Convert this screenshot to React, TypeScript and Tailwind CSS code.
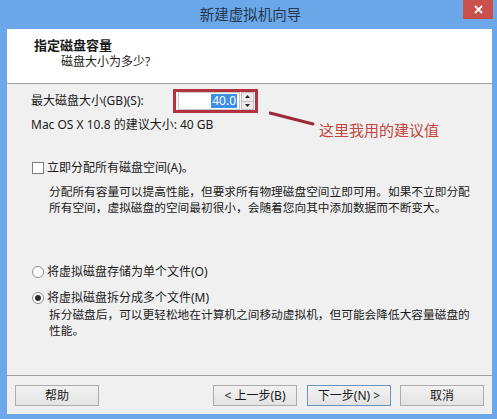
import { useState } from "react";

const WizardButton = ({
  label,
  primary = false,
  className = "",
}: {
  label: string;
  primary?: boolean;
  className?: string;
}) => (
  <button
    className={
      "h-[21px] w-[84px] text-[12px] leading-none text-[#1a1a1a] bg-gradient-to-b from-[#f2f2f2] to-[#e3e3e3] border " +
      (primary ? "border-[#6d93b8]" : "border-[#adadad]") +
      " " +
      className
    }
  >
    {label}
  </button>
);

const Radio = ({ checked }: { checked: boolean }) => (
  <span className="w-[12px] h-[12px] rounded-full border border-[#8c8c8c] bg-white flex items-center justify-center">
    {checked && <span className="w-[6px] h-[6px] rounded-full bg-[#2b2b2b]" />}
  </span>
);

const NewVmWizard = () => {
  const [size] = useState("40.0");
  const [split] = useState(true);

  return (
    <div className="w-[497px] h-[419px] bg-[#6ca7e9] flex flex-col font-['Noto_Sans','Noto_Sans_CJK_SC',sans-serif] text-[#1a1a1a] overflow-hidden">
      {/* title bar */}
      <div className="h-[29px] relative flex items-center justify-center">
        <span className="text-[14.5px] leading-none text-[#23384f] ml-[4px]">
          新建虚拟机向导
        </span>
        <div className="absolute right-[4px] top-0 w-[30px] h-[19px] bg-[#c9504b] flex items-center justify-center">
          <svg width="9" height="9" viewBox="0 0 9 9">
            <path d="M1 1L8 8M8 1L1 8" stroke="#fff" strokeWidth="1.8" />
          </svg>
        </div>
      </div>

      <div className="flex-1 ml-[7px] mr-[5px] mb-[5px] flex flex-col bg-[#f0f0f0]">
        {/* header */}
        <div className="h-[55px] bg-white border-b border-[#a0a0a0] pt-[8px]">
          <div className="pl-[27px] text-[13px] font-bold leading-[16px]">
            指定磁盘容量
          </div>
          <div className="pl-[54px] mt-[1px] text-[12px] leading-[16px]">
            磁盘大小为多少?
          </div>
        </div>

        {/* body */}
        <div className="flex-1 relative pl-[24px] text-[12px]">
          <div className="flex items-center mt-[5px] h-[24px]">
            <span className="w-[142px] leading-[16px]">最大磁盘大小(GB)(S):</span>
            <div className="w-[85px] h-[24px] border-[3px] border-[#b3323f] flex items-center pl-[2px] pr-[1px] bg-[#f7f7f7]">
              <div className="flex-1 h-[18px] bg-white border border-[#c9c9c9] flex items-center justify-end pr-[2px]">
                <span className="bg-[#3d8ee6] text-white leading-[14px] px-[1px]">{size}</span>
              </div>
              <div className="w-[13px] h-[18px] flex flex-col ml-[1px]">
                <span className="flex-1 border border-[#c2c2c2] bg-[#ececec] flex items-center justify-center">
                  <svg width="5" height="3" viewBox="0 0 5 3">
                    <path d="M0 3L2.5 0L5 3Z" fill="#222" />
                  </svg>
                </span>
                <span className="flex-1 border border-t-0 border-[#c2c2c2] bg-[#ececec] flex items-center justify-center">
                  <svg width="5" height="3" viewBox="0 0 5 3">
                    <path d="M0 0L2.5 3L5 0Z" fill="#222" />
                  </svg>
                </span>
              </div>
            </div>
          </div>
          <div className="mt-[4px] leading-[16px]">Mac OS X 10.8 的建议大小: 40 GB</div>

          {/* note pointing at the suggested value */}
          <svg
            className="absolute left-[262px] top-[27px]"
            width="46"
            height="15"
            viewBox="0 0 46 15"
          >
            <path d="M1 2L44 13" stroke="#9c2a3a" strokeWidth="3" strokeLinecap="round" />
          </svg>
          <span className="absolute left-[312px] top-[37px] text-[15px] leading-[18px] text-[#c4463f]">
            这里我用的建议值
          </span>

          <div className="flex items-center mt-[27px] h-[16px]">
            <span className="w-[12px] h-[12px] border border-[#7a7a7a] bg-white ml-[1px]" />
            <span className="ml-[3px] leading-[16px]">立即分配所有磁盘空间(A)。</span>
          </div>
          <p className="pl-[18px] mt-[7px] leading-[16px] text-[11.7px]">
            分配所有容量可以提高性能，但要求所有物理磁盘空间立即可用。如果不立即分配
            <br />
            所有空间，虚拟磁盘的空间最初很小，会随着您向其中添加数据而不断变大。
          </p>

          <div className="flex items-center mt-[49px] h-[16px]">
            <span className="ml-[1px]">
              <Radio checked={!split} />
            </span>
            <span className="ml-[3px] leading-[16px]">将虚拟磁盘存储为单个文件(O)</span>
          </div>
          <div className="flex items-center mt-[10px] h-[16px]">
            <span className="ml-[1px]">
              <Radio checked={split} />
            </span>
            <span className="ml-[3px] leading-[16px]">将虚拟磁盘拆分成多个文件(M)</span>
          </div>
          <p className="pl-[18px] mt-0 leading-[16px] text-[11.7px]">
            拆分磁盘后，可以更轻松地在计算机之间移动虚拟机，但可能会降低大容量磁盘的
            <br />
            性能。
          </p>
        </div>

        {/* footer */}
        <div className="h-[39px] border-t border-[#a0a0a0] flex items-start pt-[9px] px-[8px]">
          <WizardButton label="帮助" />
          <div className="flex-1" />
          <WizardButton label="< 上一步(B)" />
          <WizardButton label="下一步(N) >" primary className="ml-[10px]" />
          <WizardButton label="取消" className="ml-[9px]" />
        </div>
      </div>
    </div>
  );
};

export default function App() {
  return <NewVmWizard />;
}
